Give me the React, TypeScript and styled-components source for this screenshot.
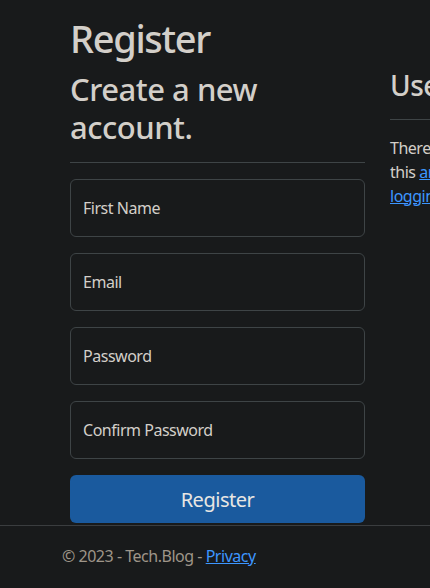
import React from 'react';
import styled, { createGlobalStyle } from 'styled-components';

const GlobalStyle = createGlobalStyle`
  html, body {
    margin: 0;
    padding: 0;
    background: #181a1b;
    overflow: hidden;
  }
  body {
    font-family: "Noto Sans", "Open Sans", sans-serif;
    color: #d3cfc9;
    font-size: 16px;
    line-height: 1.5;
    letter-spacing: -0.03em;
  }
`;

const Page = styled.div`
  width: 430px;
  height: 588px;
  display: flex;
  flex-direction: column;
  overflow: hidden;
`;

const Main = styled.main`
  padding: 14px 0 0 70px;
  height: 513px;
  box-sizing: border-box;
  display: flex;
  gap: 25px;
`;

const FormColumn = styled.section`
  width: 295px;
  flex-shrink: 0;
`;

const SideColumn = styled.section`
  width: 454px;
  flex-shrink: 0;
  padding-top: 55px;
`;

const Title = styled.h1`
  margin: 0 0 8px;
  font-size: 38px;
  font-weight: 500;
  line-height: 48px;
  letter-spacing: -0.035em;
`;

const SubTitle = styled.h2`
  margin: 0;
  font-size: 31px;
  font-weight: 500;
  line-height: 38px;
`;

const SideTitle = styled.h3`
  margin: 0;
  font-size: 28px;
  font-weight: 500;
  line-height: 1.2;
`;

const Rule = styled.hr<{ $top: number }>`
  margin: ${(p) => p.$top}px 0 16px;
  border: 0;
  border-top: 1px solid #3e4446;
`;

const Field = styled.div`
  height: 58px;
  box-sizing: border-box;
  border: 1px solid #3e4446;
  border-radius: 6px;
  background: #181a1b;
  padding: 0 12px;
  display: flex;
  align-items: center;
  margin-bottom: 16px;
  color: #d3cfc9;
`;

const SubmitButton = styled.button`
  width: 100%;
  height: 48px;
  border: 0;
  border-radius: 6px;
  background: #1a5a9e;
  color: #e8e6e3;
  font-family: inherit;
  letter-spacing: inherit;
  font-size: 20px;
  cursor: pointer;
`;

const Text = styled.p`
  margin: 0;
  line-height: 24px;
`;

const Link = styled.a`
  color: #3d96ff;
`;

const Footer = styled.footer`
  border-top: 1px solid #3a3d3f;
  margin-top: 12px;
  padding-left: 62px;
  line-height: 60px;
  color: #9e9589;
`;

const fields = ['First Name', 'Email', 'Password', 'Confirm Password'];

export default function App() {
  return (
    <Page>
      <GlobalStyle />
      <Main>
        <FormColumn>
          <Title>Register</Title>
          <SubTitle>Create a new account.</SubTitle>
          <Rule $top={16} />
          {fields.map((f) => (
            <Field key={f}>{f}</Field>
          ))}
          <SubmitButton>Register</SubmitButton>
        </FormColumn>
        <SideColumn>
          <SideTitle>Use another service to register.</SideTitle>
          <Rule $top={16} />
          <Text>
            There are no external authentication services configured. See
            this <Link href="#">article about setting up this ASP.NET application to support
            logging in via external services</Link>.
          </Text>
        </SideColumn>
      </Main>
      <Footer>
        © 2023 - Tech.Blog - <Link href="#">Privacy</Link>
      </Footer>
    </Page>
  );
}
